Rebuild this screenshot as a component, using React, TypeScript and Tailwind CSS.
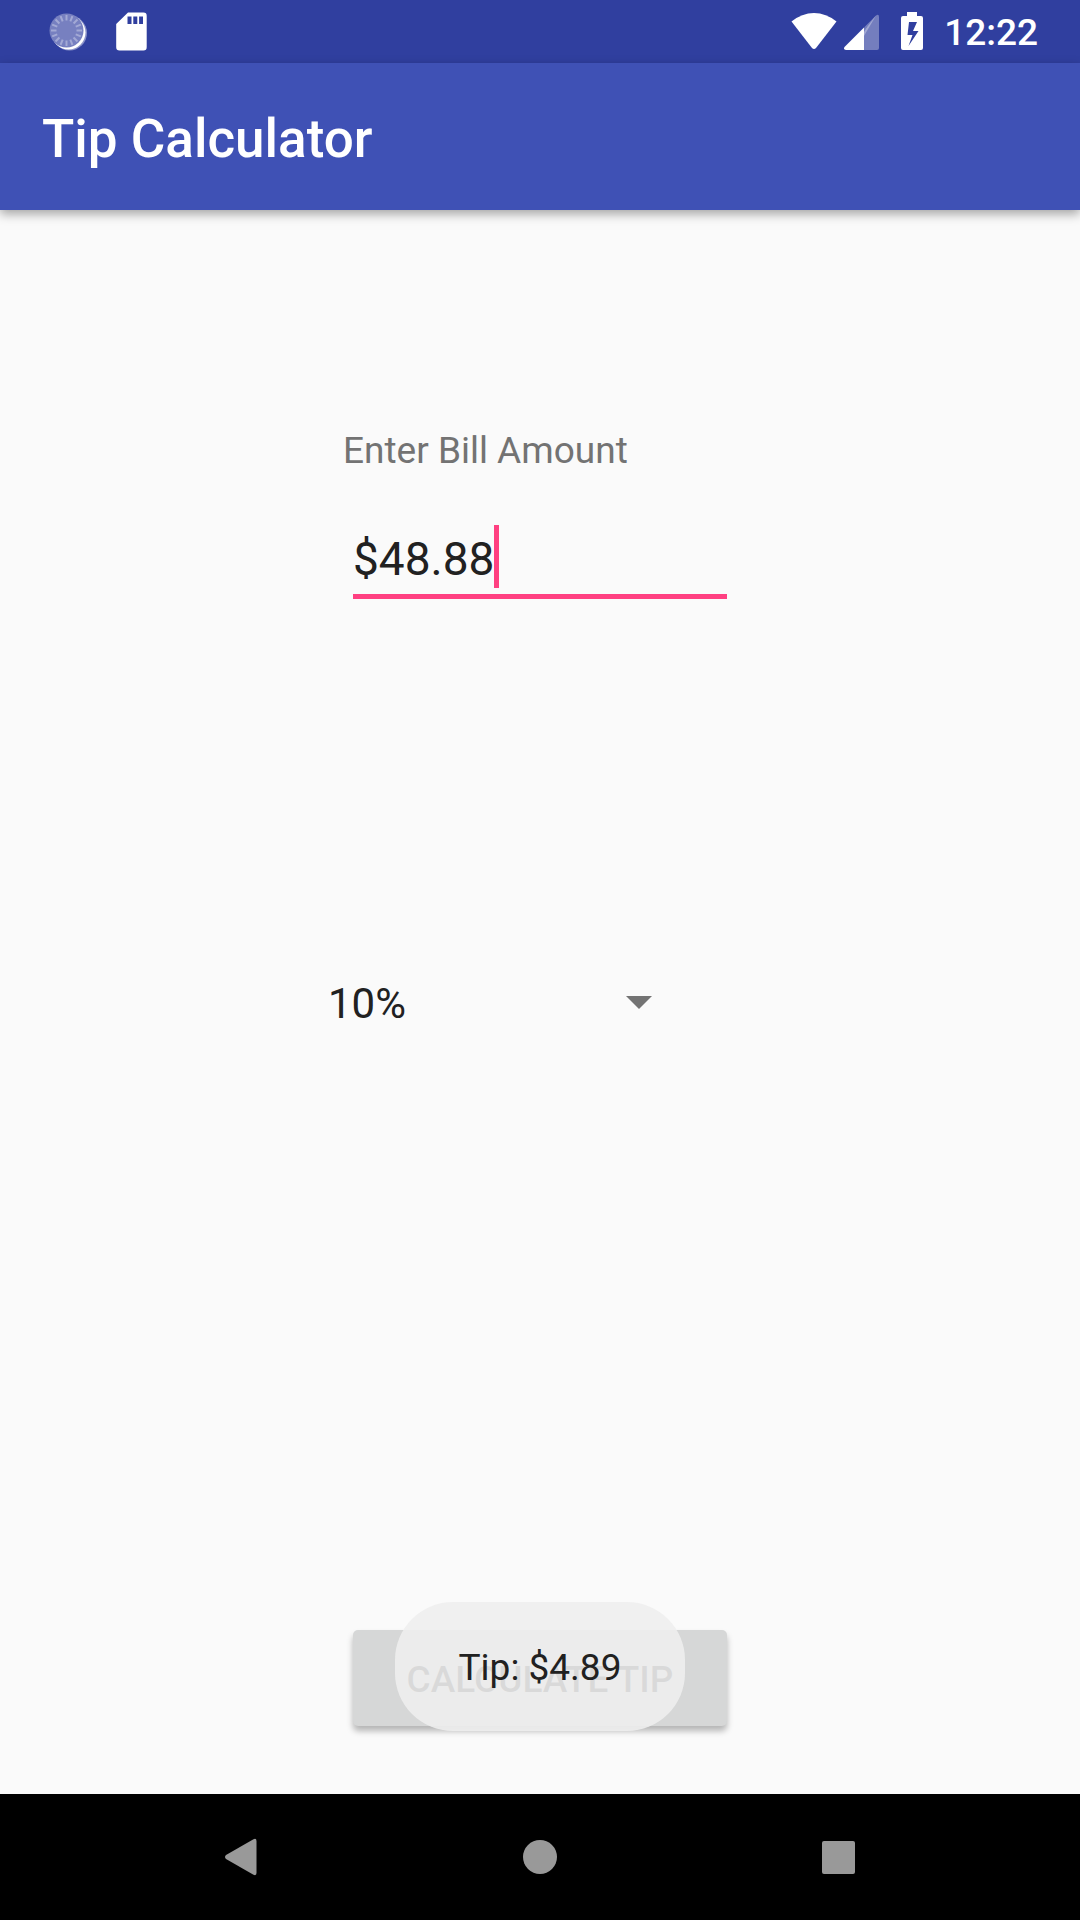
import React, { useState } from "react";

const RAYS = Array.from({ length: 16 }, (_, i) => i * 22.5);

function StatusBar() {
  return (
    <div className="flex h-[63px] items-center bg-[#303F9F] pl-[48px] pr-[42px] text-white">
      <svg width="40" height="40" viewBox="48 11 40 40" aria-hidden="true">
        <circle cx="69.500" cy="32" r="17.500" fill="#8a92c9" />
        <circle cx="68.500" cy="31.500" r="17" fill="#fff" />
        <circle cx="66.500" cy="29.500" r="17" fill="#7780c0" />
        <g stroke="#a3a9d5" strokeWidth="2">
          {RAYS.map((a) => (
            <line key={a} x1="66.5" y1="14" x2="66.5" y2="19.500" transform={`rotate(${a} 66.5 29.5)`} />
          ))}
        </g>
      </svg>
      <svg className="ml-[28px]" width="31" height="39" viewBox="116 12 31 39" aria-hidden="true">
        <path
          fill="#fff"
          fillRule="evenodd"
          d="M128 12.5H143.5Q146.700 12.5 146.700 15.700V47.300Q146.700 50.5 143.5 50.5H119.500Q116.200 50.5 116.200 47.300V24ZM127.500 16.500V24H131.500V16.500ZM133.300 16.500V24H137.300V16.500ZM139.100 16.500V24H143V16.500Z"
        />
      </svg>
      <div className="ml-auto flex items-center">
        <svg width="46" height="40" viewBox="791 12 46 40" aria-hidden="true">
          <path fill="#fff" d="M791.500 21.500Q802 13 814 13T836.500 21.500L816 48Q814 50 812 48Z" />
        </svg>
        <svg className="ml-[7px]" width="36" height="40" viewBox="844 12 36 40" aria-hidden="true">
          <path fill="#fff" fillOpacity="0.33" d="M864 31L875.500 16Q879 13 879 17V48Q879 50 877 50H864Z" />
          <path fill="#303F9F" d="M864 12H875L864 32Z" />
          <path fill="#fff" fillOpacity="0.33" d="M864 27.500L876 15.500L864 36Z" />
          <path fill="#fff" d="M864 27.500V50H846Q843 49.500 844.500 47Z" />
        </svg>
        <svg className="ml-[21px]" width="22" height="40" viewBox="902 12 22 40" aria-hidden="true">
          <path
            fill="#fff"
            fillRule="evenodd"
            d="M908 12H918V16H922Q924 16 924 18V48Q924 50 922 50H904Q902 50 902 48V18Q902 16 904 16H908ZM910 22L908.500 35H913.500L909.500 46L919.500 31H914L918 22Z"
          />
        </svg>
        <span className="ml-[21px] pt-[3px] text-[37px] font-medium leading-[44px]">12:22</span>
      </div>
    </div>
  );
}

function NavBar() {
  return (
    <nav className="grid h-[126px] grid-cols-3 bg-black px-[93px]">
      <button type="button" aria-label="Back" className="flex items-center justify-center">
        <svg width="34" height="38" viewBox="0 0 34 38" aria-hidden="true">
          <path fill="#999" d="M1 17L28.500 1.200Q31.500 0 31.500 3V35Q31.500 38 28.500 36.800L1 21Q-1 19 1 17Z" />
        </svg>
      </button>
      <button type="button" aria-label="Home" className="flex items-center justify-center">
        <span className="size-[34px] rounded-full bg-[#999]" />
      </button>
      <button type="button" aria-label="Recent apps" className="flex items-center justify-center">
        <span className="size-[33px] rounded-[2px] bg-[#999]" />
      </button>
    </nav>
  );
}

export default function App() {
  const [amount, setAmount] = useState("$48.88");
  const [rate, setRate] = useState("10%");

  return (
    <div className="flex min-h-screen flex-col bg-[#FAFAFA] font-['Roboto',sans-serif] text-[#212121]">
      <StatusBar />
      <header className="z-10 flex h-[147px] items-center bg-[#3F51B5] px-[42px] pt-[4px] shadow-[0_4px_10px_rgba(0,0,0,0.35)]">
        <h1 className="text-[53px] font-medium leading-[62px] text-white">Tip Calculator</h1>
      </header>

      <main className="relative flex flex-1 flex-col items-center pb-[68px] pt-[219px]">
        <div className="flex w-[374px] flex-1 flex-col">
          <label htmlFor="bill" className="-ml-[10px] text-[37px] leading-[44px] text-[#737373]">
            Enter Bill Amount
          </label>
          <div className="mt-[52px] flex border-b-[5px] border-[#FF4081] pb-[6px]">
            <input
              id="bill"
              value={amount}
              onChange={(e) => setAmount(e.target.value)}
              className="field-sizing-content h-[63px] pt-[4px] text-[46px] leading-[59px] caret-transparent outline-none"
            />
            <span className="h-[63px] w-[5px] bg-[#FF4081]" />
          </div>

          <div className="relative -ml-[25px] mt-[373px] w-[344px]">
            <select
              aria-label="Tip percentage"
              value={rate}
              onChange={(e) => setRate(e.target.value)}
              className="h-[63px] w-full appearance-none bg-transparent text-[42px] leading-[63px] outline-none"
            >
              <option>10%</option>
              <option>15%</option>
              <option>20%</option>
            </select>
            <svg
              className="pointer-events-none absolute right-[20px] top-[24px]"
              width="26"
              height="13"
              viewBox="0 0 26 13"
              aria-hidden="true"
            >
              <path fill="#737373" d="M0 0H26L13 13Z" />
            </svg>
          </div>

          <button
            type="button"
            className="mt-auto h-[96px] rounded-[5px] bg-[#D6D7D7] pt-[3px] text-[37px] font-medium uppercase leading-[44px] text-[#1C1C1C] shadow-[0_5px_6px_rgba(0,0,0,0.28)]"
          >
            Calculate Tip
          </button>
        </div>

        <div
          role="status"
          className="absolute bottom-[63px] flex h-[129px] items-center rounded-[58px] bg-[#EEEEEE]/90 px-[64px] pt-[3px] text-[37px] leading-[44px]"
        >
          Tip: $4.89
        </div>
      </main>
      <NavBar />
    </div>
  );
}
